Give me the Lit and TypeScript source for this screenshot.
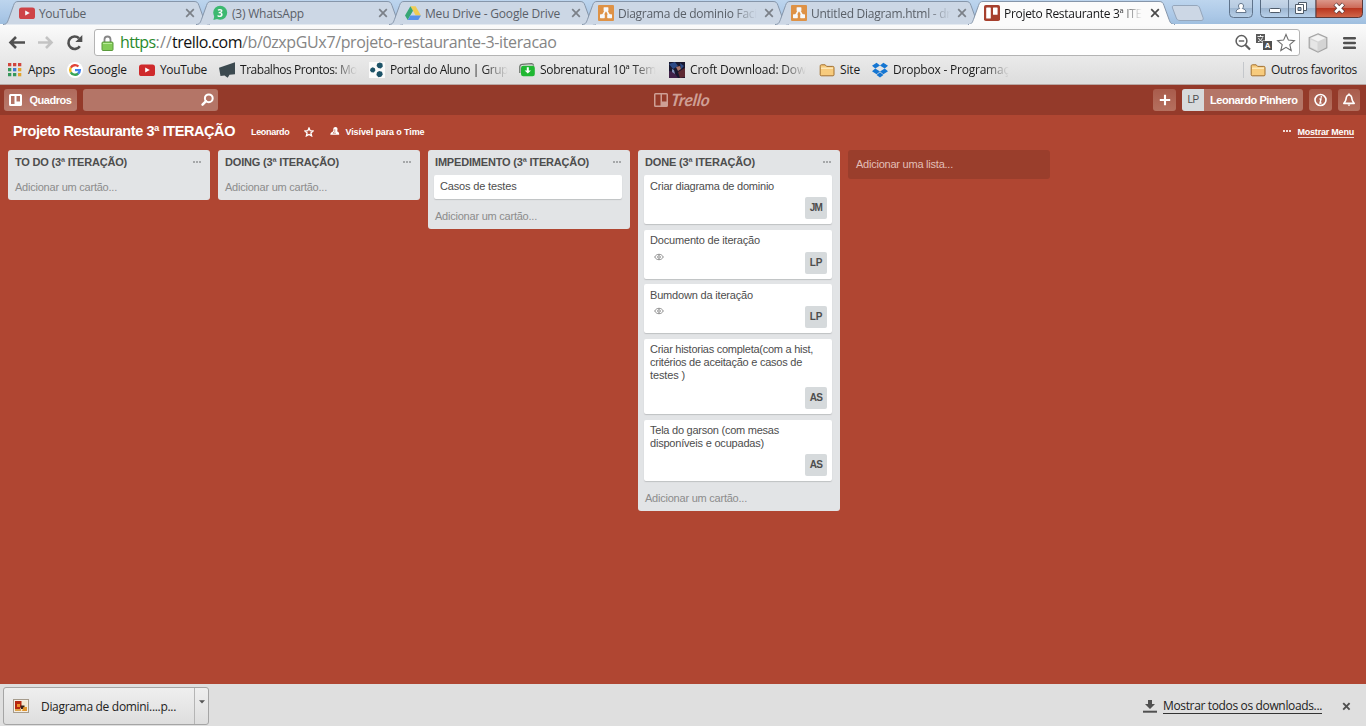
import { LitElement, html, css, svg, nothing } from "lit";
import { customElement, property } from "lit/decorators.js";
import { classMap } from "lit/directives/class-map.js";

/* Text set to a given line width by even tracking. */
@customElement("fit-label")
class FitLabel extends LitElement {
  @property() text = "";
  @property({ type: Number }) w = 0;
  @property({ type: Boolean, reflect: true }) fade = false;
  static styles = css`
    :host { display: inline-block; white-space: pre; flex: none; }
    :host([fade]) {
      -webkit-mask-image: linear-gradient(to right, #000 calc(100% - 24px), transparent);
      mask-image: linear-gradient(to right, #000 calc(100% - 24px), transparent);
    }
  `;
  updated() {
    const s = this.renderRoot.querySelector("span") as HTMLElement;
    if (!s || !this.w) return;
    s.style.letterSpacing = "0";
    const natural = s.getBoundingClientRect().width;
    s.style.letterSpacing = (this.w - natural) / this.text.length + "px";
  }
  render() {
    return html`<span>${this.text}</span>`;
  }
}

const ICONS: Record<string, any> = {
  youtube: svg`<rect x="0" y="2.500" width="16" height="11.500" rx="2.600" fill="#cf2a2c"/><path d="M6.200 5.600v5l4.600-2.500z" fill="#fff"/>`,
  whatsapp: svg`<circle cx="8.200" cy="7.800" r="7" fill="#23b45c"/><path d="M1.400 15l1.200-5 3.600 3.700z" fill="#23b45c"/><text x="8.200" y="11.500" text-anchor="middle" font-family="Open Sans, sans-serif" font-size="10" font-weight="700" fill="#fff">3</text>`,
  drive: svg`<path d="M5.400 1.200h5.200L16 10.400h-5.300z" fill="#f7cb3b"/><path d="M5.400 1.200L8 5.800 2.700 15 0 10.400z" fill="#1e9f63"/><path d="M5.400 10.400H16L13.300 15H2.700z" fill="#4485ec"/>`,
  drawio: svg`<rect width="16" height="16" rx="1" fill="#e2872b"/><path d="M8 4.500L4.300 11M8 4.500l3.700 6.500" stroke="#fff" stroke-width="1.600"/><rect x="5.600" y="2.200" width="4.800" height="4" rx=".6" fill="#fff"/><rect x="2" y="9.200" width="4.800" height="4" rx=".6" fill="#fff"/><rect x="9.200" y="9.200" width="4.800" height="4" rx=".6" fill="#fff"/>`,
  trello: svg`<rect width="16" height="16" rx="1.800" fill="#a63f2d"/><rect x="2.200" y="2.400" width="4.600" height="11.200" rx=".6" fill="#fff"/><rect x="9" y="2.400" width="4.600" height="7.400" rx=".6" fill="#fff"/>`,
  apps: svg`<g><path d="M1 1h3.300v3.300H1zM6 1h3.300v3.300H6zM11 1h3.300v3.300H11z" fill="#d0453c"/><path d="M1 6h3.300v3.300H1z" fill="#36975a"/><path d="M6 6h3.300v3.300H6z" fill="#3f79d0"/><path d="M11 6h3.300v3.300H11z" fill="#e3a32c"/><path d="M1 11h3.300v3.300H1zM6 11h3.300v3.300H6z" fill="#36975a"/><path d="M11 11h3.300v3.300H11z" fill="#e3a32c"/></g>`,
  google: svg`<circle cx="8" cy="8" r="8" fill="#fff"/><g fill="none" stroke-width="2.400"><path d="M11.400 4.500A4.800 4.800 0 0 0 3.800 5.700" stroke="#e14438"/><path d="M3.800 5.700a4.800 4.800 0 0 0 0 4.700" stroke="#f2b721"/><path d="M3.800 10.300a4.800 4.800 0 0 0 7.400 1.200" stroke="#37a556"/><path d="M11.100 11.600A4.800 4.800 0 0 0 12.800 8.100H8" stroke="#4283ee"/></g>`,
  flag: svg`<path d="M0 5.800L16 .3v11.900l-5.500.6-1.800 2.900-3.200-2.300-4 .6z" fill="#3c4a50"/>`,
  hex: svg`<rect width="16" height="16" fill="#fafafa"/><g fill="#1d5368"><path d="M8.200 1.400l2.600-1 2.600 1.200.4 2.800-2 2-2.600-.4-1.600-2z"/><path d="M1.600 6.600l2-1.400 2.200 1 .6 2.200-1.600 2-2.400-.2L1 8.600z"/><path d="M8 10.200l2.200-1.200 2.800.8.8 2.600-1.600 2.400-2.800.4-2-2.200z"/></g>`,
  green: svg`<path d="M.8 11L.8 4.500Q1 2.600 3 2.400L12.800 1.600q1.400 0 1.800 2" fill="none" stroke="#6a736a" stroke-width="1.300"/><rect x="2" y="3.800" width="13.800" height="10.400" rx="2.200" fill="#20b732"/><path d="M7.800 5.200h2v3.200h2.200l-3.200 3.200-3.200-3.200h2.200z" fill="#fff"/>`,
  croft: svg`<rect width="16" height="16" fill="#18182f"/><path d="M0 2l6-2 3 4-5 3zM11 1l4 3-3 3z" fill="#2c4a86"/><path d="M7 5l4-1 1 3-3 2z" fill="#a87468"/><path d="M0 9l5 1 4 6H0z" fill="#402048"/><path d="M9 10l7-4v9l-5 1z" fill="#5e2932"/><path d="M3 7l2 1 1 4-3-2z" fill="#8392bb"/>`,
  folder: svg`<path d="M1.200 4.200c0-1 .4-1.400 1.200-1.400h3.800l1.400 1.600h6.200c.8 0 1.200.4 1.200 1.200v7.200c0 .6-.4 1-1 1H2.200c-.6 0-1-.4-1-1z" fill="#f7cb7d" stroke="#a3702f"/><path d="M2 6.200h12" stroke="#fff2cf"/>`,
  dropbox: svg`<g fill="#1576d2"><path d="M4.600.8L8 3.600 3.300 6.500 0 3.800z"/><path d="M11.400.8L8 3.600l4.700 2.900L16 3.800z"/><path d="M0 9.200l3.300-2.700L8 9.400l-3.400 2.800z"/><path d="M16 9.200l-3.300-2.700L8 9.400l3.400 2.800z"/><path d="M4.600 13.100L8 10.300l3.400 2.800L8 15.400z"/></g>`,
};
const icon = (name: string, size = 16) =>
  html`<svg class="ico" width=${size} height=${size} viewBox="0 0 16 16">${ICONS[name]}</svg>`;

const TABS = [
  { icon: "youtube", text: "YouTube", w: 47 },
  { icon: "whatsapp", text: "(3) WhatsApp", w: 72 },
  { icon: "drive", text: "Meu Drive - Google Drive", w: 135 },
  { icon: "drawio", text: "Diagrama de dominio Faci", w: 139, fade: true },
  { icon: "drawio", text: "Untitled Diagram.html - dr", w: 140, fade: true },
  { icon: "trello", text: "Projeto Restaurante 3ª ITE", w: 138, fade: true, active: true },
];

@customElement("browser-tabs")
class BrowserTabs extends LitElement {
  static styles = css`
    :host { display: flex; height: 24px; position: relative; font: 12px "Open Sans", sans-serif; padding-left: 3px;
      background: linear-gradient(#bdd5ee, #aac7e6 70%, #9fbfdf); }
    .tab { width: 193px; height: 24px; flex: none; position: relative; display: flex; align-items: center; color: #5a6068; }
    .tab.active { color: #17181a; z-index: 2; width: 204px; }
    .shape { position: absolute; left: 0; top: 0; overflow: visible; }
    .body { position: relative; display: flex; align-items: center; flex: none; width: 175px; margin: 2px 0 0 16px; }
    .ico { flex: none; margin-right: 4px; }
    .tab:not(.active) .ico { opacity: .85; }
    .x { margin-left: auto; margin-right: -1px; flex: none; }
    .new { margin: 5px 0 0 -1px; flex: none; }
    .wins { margin-left: auto; display: flex; align-items: flex-start; padding-right: 3px; }
    .wins svg { display: block; margin-top: -1px; }
    .wins .user { margin-right: 7px; }
  `;
  render() {
    return html`
      ${TABS.map((t) => html`
        <div class=${classMap({ tab: true, active: !!t.active })}>
          <svg class="shape" width="207" height="25" viewBox="0 0 207 25">
            <path d="M0 24.500C4 24.500 4.500 22 6 18L10.500 5.500C11.500 2.500 12.500 1.500 15 1.500H191C194 1.500 195 2.500 196 5.500L200.500 18C202 22 202.500 24.500 207 24.500"
              fill=${t.active ? "#fbfbfb" : "#ccd7e5"} stroke="#8696aa" stroke-width="1"/>
            ${t.active ? svg`<path d="M1 25H206" stroke="#fbfbfb" stroke-width="2"/>` : nothing}
          </svg>
          <div class="body">
            ${icon(t.icon)}
            <fit-label .text=${t.text} .w=${t.w} ?fade=${t.fade}></fit-label>
            <svg class="x" width="10" height="10" viewBox="0 0 10 10"><path d="M1.200 1.200l7.600 7.600M8.800 1.200L1.200 8.800" stroke=${t.active ? "#4a4a4a" : "#7b8088"} stroke-width="1.700"/></svg>
          </div>
        </div>`)}
      <svg class="new" width="34" height="17" viewBox="0 0 34 17"><path d="M3 .5h22c2 0 3 .6 3.700 2.500l3.300 9.500c.6 2 0 3-2 3H9c-2 0-3-.8-3.700-2.500L1.500 3C1 1.500 1.500.5 3 .5z" fill="#ccd7e5" stroke="#95a6bb"/></svg>
      <div class="wins">
        <svg class="user" width="24" height="19" viewBox="0 0 24 19">
          <defs><linearGradient id="g" x2="0" y2="1"><stop stop-color="#c5d6e9"/><stop offset=".5" stop-color="#b7cbe1"/><stop offset=".5" stop-color="#9db6d1"/><stop offset="1" stop-color="#b8d0e8"/></linearGradient></defs>
          <path d="M.5-1v15.500q0 4 4 4h15q4 0 4-4V-1" fill="url(#g)" stroke="#5f738b"/>
          <path d="M12 4.500c1.600 0 2.500 1 2.500 2.500 0 1.200-.6 2-1.200 2.500 2.600.6 3.700 1.700 3.700 4H7c0-2.300 1.100-3.400 3.700-4C10.100 9 9.500 8.200 9.500 7c0-1.500.9-2.500 2.500-2.500z" fill="#fff" stroke="#66788d"/>
        </svg>
        <svg width="103" height="19" viewBox="0 0 103 19">
          <defs>
            <linearGradient id="b" x2="0" y2="1"><stop stop-color="#cbdaea"/><stop offset=".5" stop-color="#b9cce1"/><stop offset=".5" stop-color="#9cb4ce"/><stop offset="1" stop-color="#b9d2ec"/></linearGradient>
            <linearGradient id="r" x2="0" y2="1"><stop stop-color="#dfa397"/><stop offset=".5" stop-color="#cd6a58"/><stop offset=".5" stop-color="#b8321c"/><stop offset="1" stop-color="#d1694c"/></linearGradient>
          </defs>
          <path d="M.5-1v15.500q0 4 4 4H56V-1" fill="url(#b)" stroke="#56697f"/>
          <path d="M56-1v19.500h42.500q4 0 4-4V-1" fill="url(#r)" stroke="#5c3838"/>
          <path d="M28.500 0v18" stroke="#6a7d93"/>
          <rect x="9.500" y="9.500" width="11" height="4" rx="1" fill="#fff" stroke="#4f5b69"/>
          <path d="M38.500 3.500h8v8h-8z" fill="#fff" stroke="#4f5b69"/><path d="M35.500 5.500h8v9h-8z" fill="#fff" stroke="#4f5b69"/><path d="M38 8.500h3v3h-3z" fill="#9cb4ce" stroke="#4f5b69"/>
          <path d="M75 5l8.500 8.500M83.500 5L75 13.500" stroke="#5d3a3a" stroke-width="4.400"/><path d="M75.300 5.300l7.900 7.900M83.200 5.300l-7.900 7.900" stroke="#fff" stroke-width="2.800"/>
        </svg>
      </div>`;
  }
}

const MARKS = [
  { icon: "apps", text: "Apps", w: 27, cell: 60 },
  { icon: "google", text: "Google", w: 39, cell: 72 },
  { icon: "youtube", text: "YouTube", w: 47, cell: 80 },
  { icon: "flag", text: "Trabalhos Prontos: Mo", w: 117, fade: true, cell: 150 },
  { icon: "hex", text: "Portal do Aluno | Grup", w: 118, fade: true, cell: 150 },
  { icon: "green", text: "Sobrenatural 10ª Tem", w: 116, fade: true, cell: 150 },
  { icon: "croft", text: "Croft Download: Dow", w: 116, fade: true, cell: 150 },
  { icon: "folder", text: "Site", w: 20, cell: 53 },
  { icon: "dropbox", text: "Dropbox - Programaç", w: 116, fade: true, cell: 150 },
];

@customElement("browser-toolbar")
class BrowserToolbar extends LitElement {
  static styles = css`
    :host { display: block; height: 61px; box-sizing: border-box; background: linear-gradient(#fbfbfb, #f1f1f1 30%, #dedede 95%); border-bottom: 1px solid #b8a7a3; font: 12px "Open Sans", sans-serif; color: #1b1b1b; }
    .nav { display: flex; align-items: center; height: 37px; box-sizing: border-box; padding: 0 10px 0 8px; }
    .nav svg { flex: none; display: block; }
    .back, .fwd { margin-right: 10px; }
    .reload { margin-left: 1px; }
    .omni { margin-left: 9px; flex: 1; height: 27px; box-sizing: border-box; border: 1px solid #b4b4b4; border-radius: 3px; background: #fff; display: flex; align-items: center; padding: 0 3px 0 6px; }
    .url { display: flex; font-size: 16px; color: #858585; margin-left: 6px; line-height: 20px; padding-bottom: 2px; }
    .sec { color: #2a8a2c; } .host { color: #111; }
    .right { margin-left: auto; display: flex; gap: 4px; align-items: center; }
    .cube { margin: 0 15px 0 8px; }
    .marks { display: flex; align-items: center; height: 18px; padding: 0 9px 0 7px; }
    .mark { display: flex; align-items: center; flex: none; }
    .ico { margin-right: 5px; flex: none; }
    .marks fit-label { margin-top: -1px; }
    .other { margin-left: auto; display: flex; align-items: center; }
    .bar { width: 1px; height: 16px; background: #c4c7cb; margin-right: 6px; }
  `;
  render() {
    return html`
      <div class="nav">
        <svg class="back" width="18" height="16" viewBox="0 0 18 16"><path d="M2.500 7.500H17M8 2L2.500 7.500 8 13" fill="none" stroke="#505050" stroke-width="2.600"/></svg>
        <svg class="fwd" width="18" height="16" viewBox="0 0 18 16"><path d="M2 7.500h13.500M10 2l5.500 5.500L10 13" fill="none" stroke="#c3c3c3" stroke-width="2.600"/></svg>
        <svg class="reload" width="20" height="18" viewBox="0 0 20 18"><path d="M14.800 12.200A6.200 6.200 0 1 1 14 4.300" fill="none" stroke="#505050" stroke-width="2.600"/><path d="M17.300 1v7h-7z" fill="#505050"/></svg>
        <div class="omni">
          <svg width="13" height="16" viewBox="0 0 13 16"><path d="M3.500 8V4.500a3 3 0 0 1 6 0V8" fill="none" stroke="#868686" stroke-width="1.800"/><rect x="1" y="7" width="11" height="8.500" rx="1" fill="#83cc58" stroke="#5a9a3c"/><path d="M2 8.500h9" stroke="#b9eb99"/></svg>
          <div class="url">
            <fit-label class="sec" text="https" w="35.500"></fit-label><fit-label text="://" w="16.500"></fit-label><fit-label class="host" text="trello.com" w="70"></fit-label><fit-label text="/b/0zxpGUx7/projeto-restaurante-3-iteracao" w="314.500"></fit-label>
          </div>
          <div class="right">
            <svg width="17" height="18" viewBox="0 0 17 18"><circle cx="7.500" cy="7" r="5.400" fill="none" stroke="#5d5d5d" stroke-width="1.500"/><path d="M4.800 7h5.400" stroke="#5d5d5d" stroke-width="1.400"/><path d="M11.500 11l4.500 4.500" stroke="#5d5d5d" stroke-width="2.200"/></svg>
            <svg width="17" height="17" viewBox="0 0 17 17"><path d="M1 0h9v6.500H7.500V9H1z" fill="#5a5a5a"/><path d="M2.500 2.500h6M5.500 1v1.500M3.500 4c1 2 2 3 4 3.500M7.500 3.500C6.500 6 5 7 3 7.700" stroke="#fff" stroke-width=".9" fill="none"/><rect x="8" y="7" width="9" height="9" fill="#505050"/><text x="12.500" y="14.300" font-family="Open Sans, sans-serif" font-size="7.500" font-weight="700" fill="#fff" text-anchor="middle">A</text></svg>
            <svg width="20" height="19" viewBox="0 0 20 19"><path d="M10 1.500l2.400 5.600 6 .5-4.600 4 1.400 5.900L10 14.300l-5.200 3.200 1.400-5.900-4.600-4 6-.5z" fill="#fff" stroke="#6d6d6d" stroke-width="1.100"/></svg>
          </div>
        </div>
        <svg class="cube" width="20" height="20" viewBox="0 0 20 20"><path d="M10 .8l8.800 3.800v10.200L10 19.200 1.200 14.800V4.600z" fill="#d4d4d4" stroke="#a4a4a4" stroke-width="1.200"/><path d="M10 2l7.500 3-7.500 3.500L2.500 5z" fill="#f3f3f3"/><path d="M2.500 6.500L9.500 9.500v8L2.500 14z" fill="#e6e6e6"/></svg>
        <svg width="13" height="14" viewBox="0 0 13 14"><path d="M1.200 2.200h10.600M1.200 7h10.600M1.200 11.800h10.600" stroke="#505050" stroke-width="2.600" stroke-linecap="round"/></svg>
      </div>
      <div class="marks">
        ${MARKS.map((m) => html`<div class="mark" style="width:${m.cell}px">${icon(m.icon)}<fit-label .text=${m.text} .w=${m.w} ?fade=${m.fade}></fit-label></div>`)}
        <div class="other"><div class="bar"></div>${icon("folder")}<fit-label text="Outros favoritos" w="86"></fit-label></div>
      </div>`;
  }
}

const W_ADD = 102;
interface Card { lines: { t: string; w: number }[]; who?: string; eye?: boolean; }
const LISTS: { title: string; w: number; cards: Card[] }[] = [
  { title: "TO DO (3ª ITERAÇÃO)", w: 112, cards: [] },
  { title: "DOING (3ª ITERAÇÃO)", w: 114, cards: [] },
  { title: "IMPEDIMENTO (3ª ITERAÇÃO)", w: 154, cards: [{ lines: [{ t: "Casos de testes", w: 76.5 }] }] },
  { title: "DONE (3ª ITERAÇÃO)", w: 110, cards: [
    { lines: [{ t: "Criar diagrama de dominio", w: 124 }], who: "JM" },
    { lines: [{ t: "Documento de iteração", w: 110 }], who: "LP", eye: true },
    { lines: [{ t: "Bumdown da iteração", w: 103 }], who: "LP", eye: true },
    { lines: [{ t: "Criar historias completa(com a hist,", w: 163 }, { t: "critérios de aceitação e casos de", w: 152 }, { t: "testes )", w: 35 }], who: "AS" },
    { lines: [{ t: "Tela do garson (com mesas", w: 129 }, { t: "disponíveis e ocupadas)", w: 114 }], who: "AS" },
  ] },
];

@customElement("trello-header")
class TrelloHeader extends LitElement {
  static styles = css`
    :host { display: grid; grid-template-columns: 1fr auto 1fr; align-items: center; height: 30px; padding: 0 6px 0 4px; background: #943a2a; font: bold 11px "Liberation Sans", Arial, sans-serif; color: #fff; }
    .side { display: flex; align-items: center; }
    .end { justify-content: flex-end; gap: 6px; }
    .btn { height: 22px; border-radius: 3px; background: #b47567; display: flex; align-items: center; justify-content: center; }
    .boards { width: 73px; box-sizing: border-box; padding-right: 1px; background: linear-gradient(#b06a5b, #b87b6d); gap: 8px; }
    .search { width: 135px; margin-left: 6px; justify-content: flex-end; padding-right: 4px; box-sizing: border-box; }
    .sq { width: 22px; background: linear-gradient(#a95c4c, #b5705f); }
    .sq.add { width: 23px; }
    .me { width: 121px; justify-content: flex-start; overflow: hidden; }
    .init { width: 22px; height: 22px; background: #d7dadc; color: #4d4d4d; font: 10px/22px "Liberation Sans", Arial, sans-serif; text-align: center; margin-right: 6px; }
    .logo { display: flex; align-items: center; gap: 3px; color: #ce9f95; font: italic 700 17px/20px Lato, sans-serif; padding-left: 1px; }
    .word { transform: skewX(-8deg); }
    svg { display: block; }
  `;
  render() {
    return html`
      <div class="side">
        <div class="btn boards"><svg width="13" height="12" viewBox="0 0 13 12"><path fill-rule="evenodd" d="M1.500 0h10Q13 0 13 1.500v9Q13 12 11.500 12h-10Q0 12 0 10.500v-9Q0 0 1.500 0zM2 2v8h3.500V2zm5.500 0v5.500H11V2z" fill="#fff"/></svg><fit-label text="Quadros" w="42"></fit-label></div>
        <div class="btn search"><svg width="14" height="14" viewBox="0 0 14 14"><circle cx="8.800" cy="5.300" r="3.900" fill="none" stroke="#fff" stroke-width="2"/><path d="M6 8.200L2.500 11.700" stroke="#fff" stroke-width="2.400" stroke-linecap="round"/></svg></div>
      </div>
      <div class="logo"><svg width="14" height="14" viewBox="0 0 14 14"><path fill-rule="evenodd" d="M1.500 0h11Q14 0 14 1.500v11Q14 14 12.500 14h-11Q0 14 0 12.500v-11Q0 0 1.500 0zM1.500 1.500v11h5v-11zm6.500 0v7h4.500v-7z" fill="#ce9f95"/></svg><fit-label class="word" text="Trello" w="42"></fit-label></div>
      <div class="side end">
        <div class="btn sq add"><svg width="12" height="12" viewBox="0 0 12 12"><path d="M6 .8v10.400M.8 6h10.400" stroke="#fff" stroke-width="2.100"/></svg></div>
        <div class="btn me"><div class="init"><fit-label text="LP" w="11"></fit-label></div><fit-label text="Leonardo Pinhero" w="87.500"></fit-label></div>
        <div class="btn sq add"><svg width="14" height="14" viewBox="0 0 14 14"><circle cx="6.500" cy="7" r="5.500" fill="none" stroke="#fff" stroke-width="1.600"/><path d="M5.500 6H7L6 10h1.500" stroke="#fff" stroke-width="1.400" fill="none"/><circle cx="7.300" cy="3.900" r=".9" fill="#fff"/></svg></div>
        <div class="btn sq"><svg width="14" height="14" viewBox="0 0 14 14"><path d="M7 2C4.500 2 4.200 4.200 4 6.200 3.800 8.200 3 9 1.800 10.400h10.400C11 9 10.200 8.200 10 6.200 9.800 4.200 9.500 2 7 2z" fill="none" stroke="#fff" stroke-width="1.600" stroke-linejoin="round"/><path d="M5.500 11.500h3L7 13.300zM6.200.6h1.600V2H6.200z" fill="#fff"/></svg></div>
      </div>`;
  }
}

const dots = (fill: string) => html`<svg width="9" height="3" viewBox="0 0 9 3"><path d="M0 0h2v2H0zM3 0h2v2H3zM6 0h2v2H6z" fill=${fill}/></svg>`;

@customElement("trello-board")
class TrelloBoard extends LitElement {
  static styles = css`
    :host { display: block; flex: 1; background: #b04632; font: 11px/13px "Liberation Sans", Arial, sans-serif; color: #4d4d4d; }
    svg { display: block; flex: none; }
    .head { height: 35px; box-sizing: border-box; padding: 0 12px 3px 13px; display: flex; align-items: center; color: #fff; font-weight: bold; font-size: 9px; }
    .name { font-size: 14.500px; line-height: 18px; margin-right: 16px; }
    .star { margin: 1px 16px 0 14px; }
    .vis { margin-right: 6px; }
    .menu { margin-left: auto; display: flex; align-items: center; gap: 6px; }
    .link { border-bottom: 1px solid #f0d5cf; line-height: 10px; margin-top: 3px; }
    .small { margin-top: 2px; }
    .lists { display: flex; align-items: flex-start; gap: 8px; padding-left: 8px; }
    .list { width: 202px; box-sizing: border-box; background: #e2e4e6; border-radius: 3px; padding: 0 8px 0 6px; }
    .top { height: 25px; display: flex; align-items: center; justify-content: space-between; font-weight: bold; padding-left: 1px; box-sizing: border-box; }
    .cards { display: flex; flex-direction: column; gap: 5.650px; }
    .card { background: #fff; border-radius: 2px; box-shadow: 0 1px 1px #bfc1c3; padding: 4.520px 5px 5px 6px; }
    .card.plain { padding-bottom: 6.480px; }
    .line { height: 13px; display: flex; }
    .foot { margin-top: 4.480px; display: flex; justify-content: space-between; height: 22px; }
    .foot.eye { padding-left: 3.500px; }
    .foot svg { margin-top: 1px; }
    .who { margin-left: auto; width: 22px; height: 22px; border-radius: 2px; background: #d6dadc; font: bold 10px/22px "Liberation Sans", Arial, sans-serif; text-align: center; }
    .add { color: #8c8c8c; height: 25px; padding: 6px 0 0 1px; box-sizing: border-box; }
    .full .add { height: 30px; padding-top: 11px; }
    .newlist { width: 202px; height: 29px; box-sizing: border-box; background: #9a3e2c; border-radius: 3px; padding: 8px; color: #e3beb7; }
  `;
  render() {
    return html`
      <div class="head">
        <fit-label class="name" text="Projeto Restaurante 3ª ITERAÇÃO" w="222"></fit-label>
        <fit-label class="small" text="Leonardo" w="38.500"></fit-label>
        <svg class="star" width="10" height="10" viewBox="0 0 10 10"><path d="M5 1l1.200 2.700 2.900.3L6.900 6l.7 2.900L5 7.400 2.400 8.900 3.100 6 .9 4l2.900-.3z" fill="none" stroke="#fff" stroke-width="1.300"/></svg>
        <svg class="vis" width="10" height="10" viewBox="0 0 10 10"><path d="M5.500 1c1.500 0 2.200 1 2 2.400C7.300 4.800 7 5.200 7.400 5.600c1 .4 1.800 1 1.800 3.100H.300C.300 7 1.300 6.300 2.500 5.700 3.500 5.200 3.300 4.700 3.300 3.300 3.300 1.900 4.200 1 5.500 1z" fill="#fff"/><path d="M4.800 3.200v2.200L3 7.200h3" stroke="#b04632" stroke-width=".6" fill="none"/></svg>
        <fit-label class="small" text="Visível para o Time" w="79"></fit-label>
        <div class="menu">${dots("#f3dcd7")}<fit-label class="link" text="Mostrar Menu" w="56.500"></fit-label></div>
      </div>
      <div class="lists">
        ${LISTS.map((l) => html`
          <section class=${classMap({ list: true, full: l.cards.length > 0 })}>
            <div class="top"><fit-label .text=${l.title} .w=${l.w}></fit-label>${dots("#a5a7a9")}</div>
            <div class="cards">${l.cards.map((c) => html`
              <div class=${classMap({ card: true, plain: !c.who })}>
                ${c.lines.map((x) => html`<div class="line"><fit-label .text=${x.t} .w=${x.w}></fit-label></div>`)}
                ${c.who ? html`<div class=${classMap({ foot: true, eye: !!c.eye })}>
                  ${c.eye ? html`<svg width="10" height="8" viewBox="0 0 10 8"><path d="M.7 4C2.500 .4 7.500 .4 9.300 4 7.500 7.600 2.500 7.600 .7 4z" fill="none" stroke="#8c8c8c"/><circle cx="5" cy="4" r="1.300" fill="none" stroke="#8c8c8c"/></svg>` : nothing}
                  <div class="who"><fit-label .text=${c.who} .w=${12.5}></fit-label></div></div>` : nothing}
              </div>`)}</div>
            <div class="add"><fit-label text="Adicionar um cartão..." .w=${W_ADD}></fit-label></div>
          </section>`)}
        <div class="newlist"><fit-label text="Adicionar uma lista..." w="97"></fit-label></div>
      </div>`;
  }
}

@customElement("download-shelf")
class DownloadShelf extends LitElement {
  static styles = css`
    :host { display: flex; align-items: center; height: 42px; background: #dfdfdf; padding: 0 15px 0 3px; box-sizing: border-box; font: 12px/16px "Open Sans", sans-serif; color: #222; }
    svg { display: block; flex: none; }
    .item { display: flex; width: 206px; height: 38px; margin-top: 2px; box-sizing: border-box; border: 1px solid #a5a5a5; border-radius: 3px; background: linear-gradient(#efefef, #dedede); align-items: center; padding-left: 9px; }
    .name { margin: 2px auto 0 12px; }
    .drop { width: 14px; align-self: stretch; border-left: 1px solid #b5b5b5; display: flex; justify-content: center; padding-top: 12px; box-sizing: border-box; }
    .all { margin-left: auto; display: flex; align-items: center; gap: 6px; padding-top: 2px; }
    .link { border-bottom: 1px solid #333; line-height: 14px; }
    .x { margin: 2px 0 0 20px; }
  `;
  render() {
    return html`
      <div class="item">
        <svg width="16" height="14" viewBox="0 0 16 14"><rect x=".5" y=".5" width="15" height="13" fill="#f5ede3" stroke="#a59b8c"/><rect x="2" y="2" width="12" height="10" fill="#f3e6cf"/><path d="M2 2h6.500v5L7 10H2z" fill="#b5260f"/><path d="M4 5h3v3H4z" fill="#ee8d2b"/><path d="M7.500 6.500h4V10H8z" fill="#3a2013"/><path d="M10.500 8H14v4H9z" fill="#e2952c"/><path d="M2 10h6v2H2z" fill="#dca54b"/></svg>
        <fit-label class="name" text="Diagrama de domini....p..." w="135"></fit-label>
        <div class="drop"><svg width="6" height="4" viewBox="0 0 6 4"><path d="M0 .3h6L3 3.600z" fill="#555"/></svg></div>
      </div>
      <div class="all">
        <svg width="14" height="13" viewBox="0 0 14 13"><path d="M5 0h4v4h3L7 9 2 4h3z" fill="#505050"/><path d="M0 11.700h14" stroke="#505050" stroke-width="2"/></svg>
        <fit-label class="link" text="Mostrar todos os downloads..." w="159"></fit-label>
      </div>
      <svg class="x" width="9" height="9" viewBox="0 0 9 9"><path d="M1.200 1.200l6.400 6.400M7.600 1.200L1.200 7.600" stroke="#4f4f4f" stroke-width="1.900"/></svg>`;
  }
}

@customElement("app-root")
class AppRoot extends LitElement {
  static styles = css`
    :host { display: flex; flex-direction: column; width: 1366px; height: 726px; overflow: hidden; }
  `;
  render() {
    return html`<browser-tabs></browser-tabs><browser-toolbar></browser-toolbar><trello-header></trello-header><trello-board></trello-board><download-shelf></download-shelf>`;
  }
}
